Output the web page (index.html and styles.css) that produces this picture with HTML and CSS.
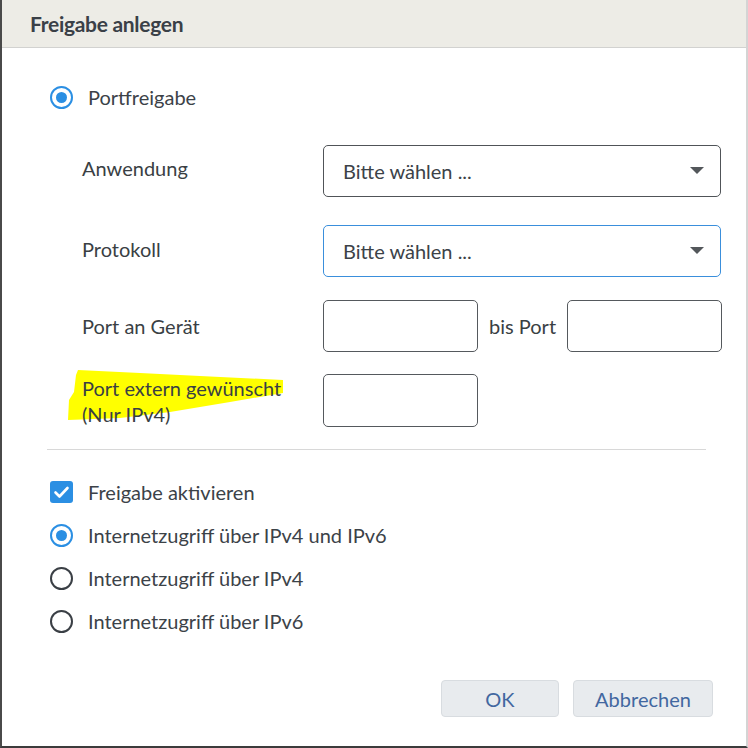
FILE: index.html
```html
<!DOCTYPE html>
<html lang="de">
<head>
<meta charset="utf-8">
<title>Freigabe anlegen</title>
<link rel="stylesheet" href="styles.css">
</head>
<body>
<div class="dialog">
  <div class="header"><h1 class="title">Freigabe anlegen</h1></div>
  <div class="content">
    <label class="option top-option">
      <span class="radio checked"></span>
      <span class="opt-text">Portfreigabe</span>
    </label>

    <div class="form">
      <div class="row row-first">
        <div class="label">Anwendung</div>
        <div class="select"><span>Bitte wählen ...</span><span class="arrow"></span></div>
      </div>
      <div class="row row-second">
        <div class="label">Protokoll</div>
        <div class="select focus"><span>Bitte wählen ...</span><span class="arrow"></span></div>
      </div>
      <div class="row row-third">
        <div class="label">Port an Gerät</div>
        <div class="ctrls">
          <div class="input"></div>
          <span class="bis">bis Port</span>
          <div class="input"></div>
        </div>
      </div>
      <div class="row">
        <div class="label label-2line"><span class="hl-wrap"><svg class="highlight" width="216" height="51" viewBox="0 0 216 51"><path d="M10 0 L72 3 L132 6 L215 10 L215 23 L162 32 L102 42 L52 48 L0 50 L1 30 L6 22 L8 5 Z" fill="#ffff00"/></svg><span class="hl-text">Port extern gewünscht<br>(Nur IPv4)</span></span></div>
        <div class="ctrls"><div class="input"></div></div>
      </div>
    </div>

    <div class="sep"></div>

    <div class="options">
      <label class="option">
        <span class="checkbox"><svg width="23" height="22" viewBox="0 0 23 22"><path d="M5.5 11.5 L9.5 15.5 L17.5 7" fill="none" stroke="#fff" stroke-width="2.6" stroke-linecap="round" stroke-linejoin="round"/></svg></span>
        <span class="opt-text">Freigabe aktivieren</span>
      </label>
      <label class="option">
        <span class="radio checked"></span>
        <span class="opt-text">Internetzugriff über IPv4 und IPv6</span>
      </label>
      <label class="option">
        <span class="radio"></span>
        <span class="opt-text">Internetzugriff über IPv4</span>
      </label>
      <label class="option">
        <span class="radio"></span>
        <span class="opt-text">Internetzugriff über IPv6</span>
      </label>
    </div>

    <div class="buttons">
      <button class="btn btn-ok">OK</button>
      <button class="btn btn-cancel">Abbrechen</button>
    </div>
  </div>
</div>
</body>
</html>
```

FILE: styles.css
```css
* { box-sizing: border-box; }
html, body { margin: 0; padding: 0; background: #fff; }
body { font-family: Lato, "Open Sans", sans-serif; color: #3c4248; }

.dialog {
  width: 748px;
  height: 748px;
  border-left: 2px solid #4a4a4a;
  border-right: 2px solid #d4d4d4;
  border-bottom: 2px solid #3c3c3c;
  background: #fff;
  display: flex;
  flex-direction: column;
}

.header {
  height: 48px;
  background: #edece6;
  border-bottom: 1px solid #d2d2d0;
  display: flex;
  align-items: center;
  padding-left: 28px;
  flex-shrink: 0;
}
.title {
  margin: 0;
  font-size: 21px;
  font-weight: 700;
  color: #3a4047;
  letter-spacing: -0.3px;
}

.content {
  flex: 1;
  padding: 37px 0 0 48px;
  display: flex;
  flex-direction: column;
}

.option {
  display: flex;
  align-items: center;
  height: 24px;
  gap: 15px;
}
.opt-text {
  font-size: 20px;
  color: #3c4248;
}

.radio {
  width: 23px;
  height: 23px;
  border-radius: 50%;
  border: 2.5px solid #3a3f45;
  display: flex;
  align-items: center;
  justify-content: center;
  flex-shrink: 0;
}
.radio.checked { border-color: #2b8fe3; }
.radio.checked::after {
  content: "";
  width: 11px;
  height: 11px;
  border-radius: 50%;
  background: #2b8fe3;
}

.checkbox {
  width: 23px;
  height: 22px;
  border-radius: 3px;
  background: #2b8fe3;
  display: flex;
  flex-shrink: 0;
}

.form {
  margin-top: 36px;
  padding-left: 32px;
  display: flex;
  flex-direction: column;
  gap: 23px;
}
.row {
  display: grid;
  grid-template-columns: 241px auto;
  align-items: center;
}
.row-first { margin-bottom: 5px; }
.row-third { margin-bottom: -1px; }
.label {
  font-size: 20px;
  color: #3a3f44;
}
.row-first .label { margin-top: -7px; }
.row-second .label { margin-top: -4px; }
.label-2line { line-height: 26px; }

.hl-wrap { position: relative; display: inline-block; }
.highlight { position: absolute; left: -14px; top: -5px; }
.hl-text { position: relative; }

.select {
  width: 398px;
  height: 52px;
  border: 1px solid #505458;
  border-radius: 5px;
  display: flex;
  align-items: center;
  justify-content: space-between;
  padding: 0 16px 0 19px;
  font-size: 20px;
  color: #3c4248;
}
.select.focus { border-color: #3a8fdc; }
.arrow {
  width: 0;
  height: 0;
  border-left: 7px solid transparent;
  border-right: 7px solid transparent;
  border-top: 7px solid #53575b;
  margin-top: -2px;
}

.ctrls {
  display: flex;
  align-items: center;
}
.input {
  width: 155px;
  height: 53px;
  border: 1px solid #55595d;
  border-radius: 5px;
}
.row-third .input { height: 52px; }
.bis {
  font-size: 20px;
  color: #3a3f44;
  margin: 0 11px 0 11px;
}

.sep {
  height: 1px;
  background: #d8d8d8;
  width: 659px;
  margin: 22px 0 0 -3px;
}

.options {
  margin-top: 30px;
  display: flex;
  flex-direction: column;
  gap: 19px;
}

.buttons {
  margin-top: auto;
  margin-bottom: 29px;
  display: flex;
  justify-content: flex-end;
  gap: 14px;
  padding-right: 33px;
}
.btn {
  height: 37px;
  background: #e8ebee;
  border: 1px solid #d8dce0;
  border-radius: 4px;
  font-family: Lato, sans-serif;
  font-size: 20px;
  color: #4267a0;
  padding: 0;
}
.btn-ok { width: 118px; }
.btn-cancel { width: 140px; }
```
